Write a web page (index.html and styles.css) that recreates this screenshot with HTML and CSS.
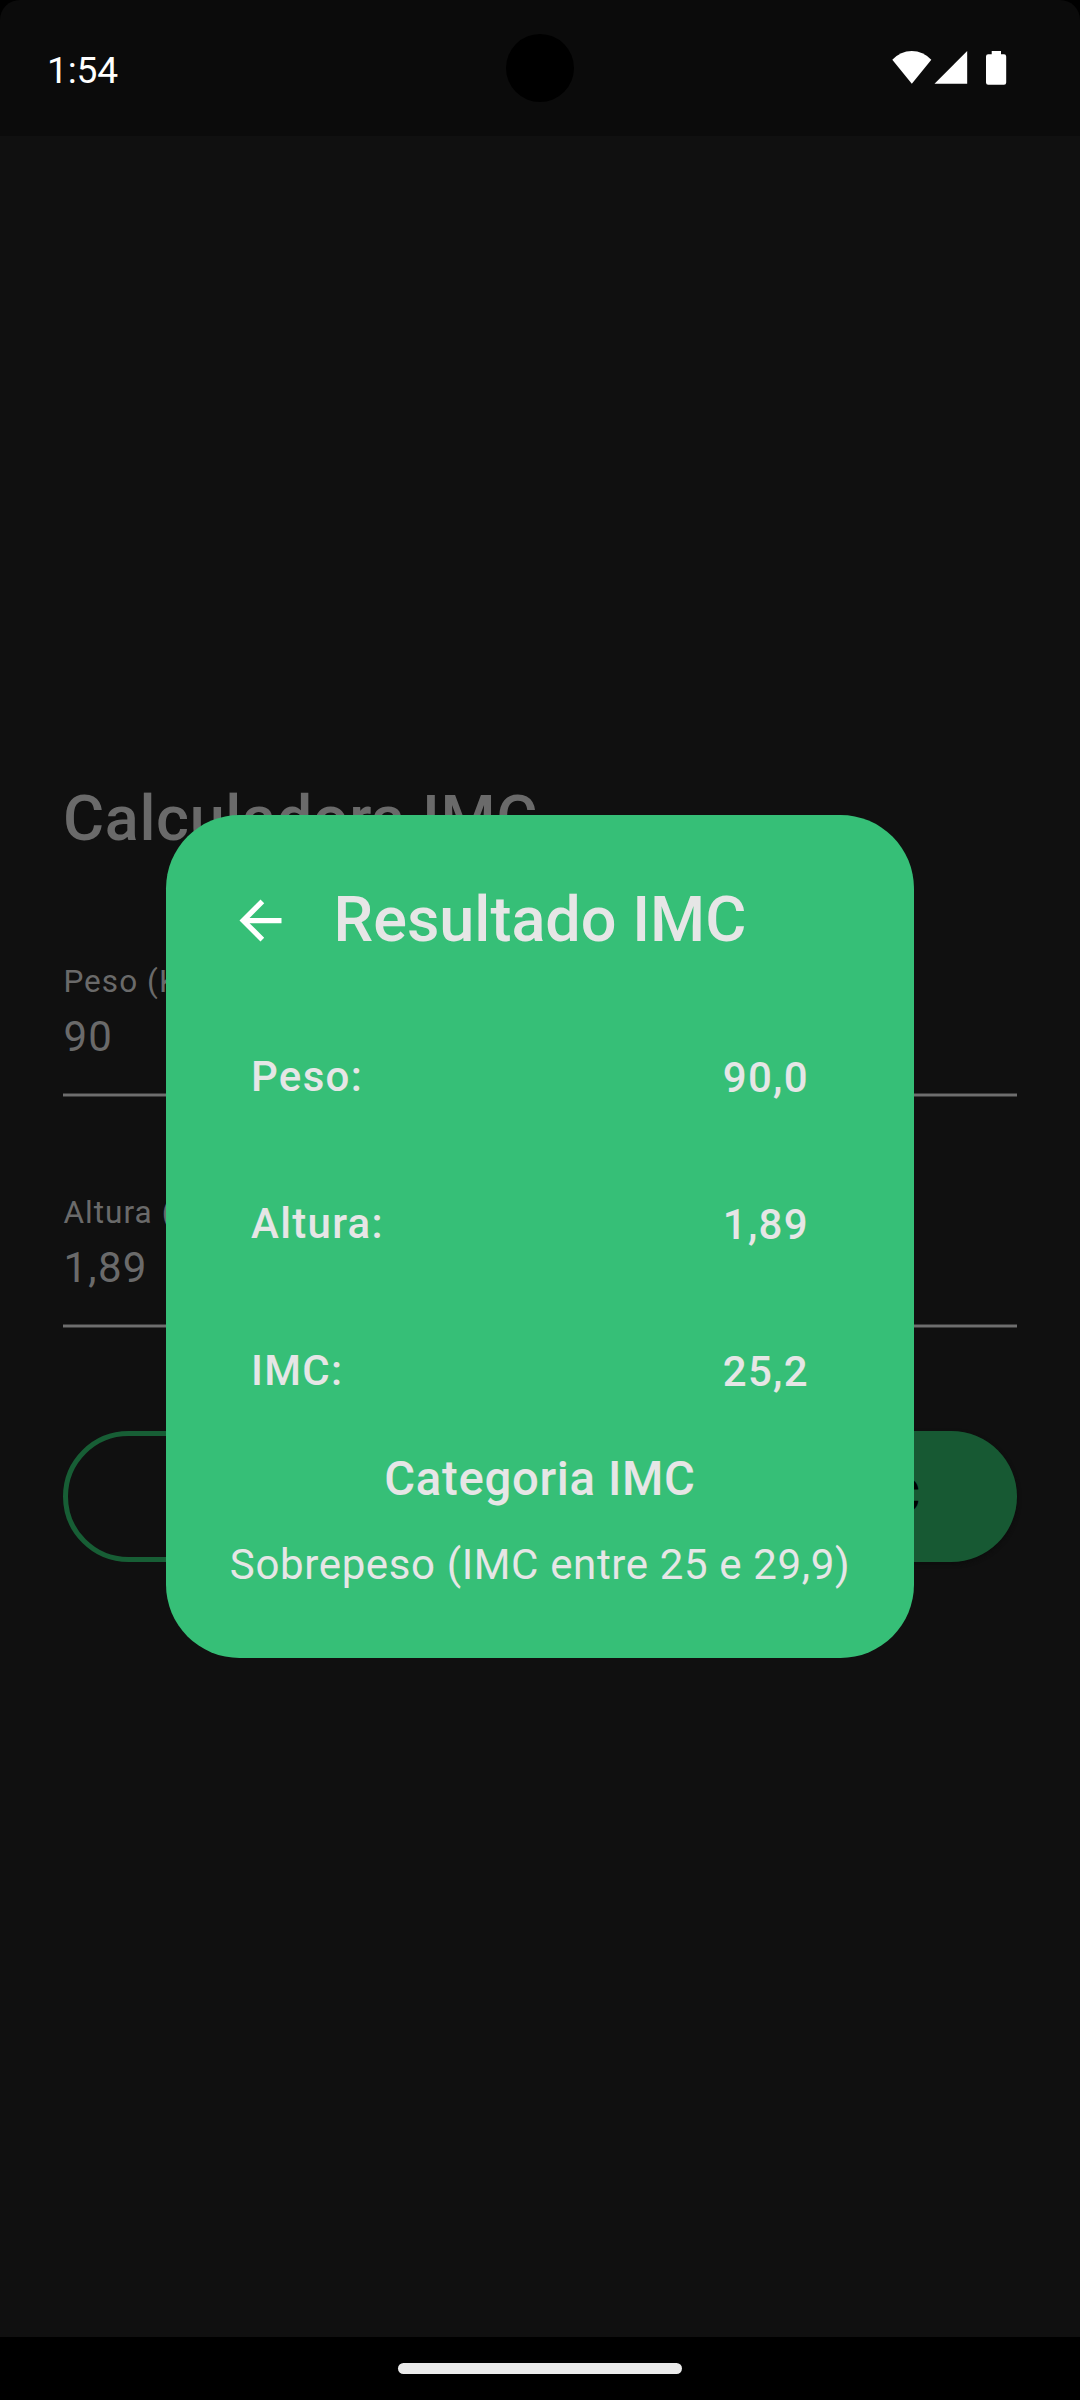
FILE: index.html
```html
<!DOCTYPE html>
<html lang="pt-BR">
<head>
<meta charset="utf-8">
<title>Calculadora IMC</title>
<link rel="stylesheet" href="styles.css">
</head>
<body>
<div class="screen">
  <header class="status-bar">
    <span class="clock">1:54</span>
    <span class="camera"></span>
    <svg class="status-icons" width="116" height="36" viewBox="0 0 116 36" fill="#fff">
      <path d="M0.300 9.800Q8.500 1 19.800 1T39.300 9.800L19.800 33.700Z"/>
      <path d="M42.500 33.700L75.200 1V33.700Z"/>
      <path d="M99.700 1H109V4.300H112Q114.200 4.300 114.200 6.500V32.500Q114.200 34.700 112 34.700H96.200Q94 34.700 94 32.500V6.500Q94 4.300 96.200 4.300H99.700Z"/>
    </svg>
  </header>
  <main class="form">
    <h1 class="title">Calculadora IMC</h1>
    <div class="field">
      <span class="label">Peso (Kg)</span>
      <span class="input">90</span>
    </div>
    <div class="field">
      <span class="label">Altura (m)</span>
      <span class="input">1,89</span>
    </div>
    <div class="actions">
      <button class="button outlined">Limpar</button>
      <button class="button filled">Calcular IMC</button>
    </div>
  </main>
  <footer class="nav-bar"><span class="handle"></span></footer>

  <section class="dialog">
    <div class="dialog-head">
      <svg class="back" width="63" height="63" viewBox="0 0 24 24" fill="#fff"><path d="M20 11H7.830l5.590-5.590L12 4l-8 8 8 8 1.410-1.410L7.830 13H20v-2z"/></svg>
      <h2 class="title">Resultado IMC</h2>
    </div>
    <dl class="results">
      <div class="row"><dt>Peso:</dt><dd>90,0</dd></div>
      <div class="row"><dt>Altura:</dt><dd>1,89</dd></div>
      <div class="row"><dt>IMC:</dt><dd>25,2</dd></div>
    </dl>
    <h3 class="category">Categoria IMC</h3>
    <p class="verdict">Sobrepeso (IMC entre 25 e 29,9)</p>
  </section>
</div>
</body>
</html>
```
FILE: styles.css
```css
* { box-sizing: border-box; margin: 0; padding: 0; }
body { background: #000; font-family: Roboto, sans-serif; letter-spacing: 1.3125px; }
.screen {
  position: relative;
  display: flex;
  flex-direction: column;
  width: 1080px;
  height: 2400px;
  overflow: hidden;
}
.status-bar {
  display: grid;
  grid-template-columns: 1fr 68px 1fr;
  align-items: center;
  height: 136px;
  padding: 0 72px 0 47px;
  background: #0b0b0b;
  border-radius: 20px 20px 0 0;
  color: #fff;
}
.clock { font-size: 37.200px; letter-spacing: -0.200px; line-height: 44px; padding-top: 3px; }
.camera { width: 68px; height: 68px; margin-left: 12.500px; border-radius: 50%; background: #000; }
.status-icons { justify-self: end; }
.form { flex: 1; padding: 641px 63px 0; background: #101010; color: #6a6a6a; }
.title { font-size: 63px; font-weight: 500; line-height: 84px; letter-spacing: 0; white-space: nowrap; }
.form .title { margin-bottom: 99px; letter-spacing: 0.650px; }
.field { display: flex; flex-direction: column; height: 137px; margin-bottom: 94px; padding-top: 1px; }
.label { padding-left: 0.400px; font-size: 31.500px; line-height: 42px; letter-spacing: 1.050px; }
.input { padding-left: 0.400px; font-size: 42px; line-height: 63px; margin-top: 2px; }
.field::after {
  content: "";
  height: 4px;
  margin-top: auto;
  background: linear-gradient(#3d3d3d 1px, #6e6e6e 1px 3px, #3d3d3d 3px);
}
.actions { display: flex; gap: 21px; padding-top: 9px; }
.button {
  flex: 1;
  height: 131px;
  border: 0;
  border-radius: 66px;
  font: 500 47.250px Roboto, sans-serif;
  letter-spacing: 0;
  white-space: nowrap;
}
.outlined { border: 5px solid #175e35; background: none; color: #175e35; }
.filled { padding: 0 2px 2px 0; background: #175933; color: #000; box-shadow: 0 2px 4px #0c0c0c; }
.nav-bar { display: flex; align-items: center; justify-content: center; height: 63px; background: #000; }
.handle { width: 284px; height: 11px; border-radius: 6px; background: #ebebeb; }
.dialog {
  position: absolute;
  left: 166px;
  top: 815px;
  width: 748px;
  height: 843px;
  padding-top: 63px;
  border-radius: 73.500px;
  background: #36bf77;
  color: #e6e6e6;
}
.dialog-head { display: flex; align-items: center; gap: 41.500px; padding-left: 63px; }
.back { flex: none; }
.results { display: flex; flex-direction: column; gap: 84px; margin-top: 83px; padding: 0 105px 0 85px; }
.row { display: flex; justify-content: space-between; font-size: 42px; font-weight: 500; line-height: 63px; height: 63px; }
.row dd { padding-top: 1px; }
.category { margin-top: 46px; font-size: 47.250px; font-weight: 500; line-height: 63px; letter-spacing: 0.680px; text-align: center; }
.verdict { margin-top: 22px; font-size: 42px; line-height: 63px; letter-spacing: 0.640px; text-align: center; white-space: nowrap; }
```
